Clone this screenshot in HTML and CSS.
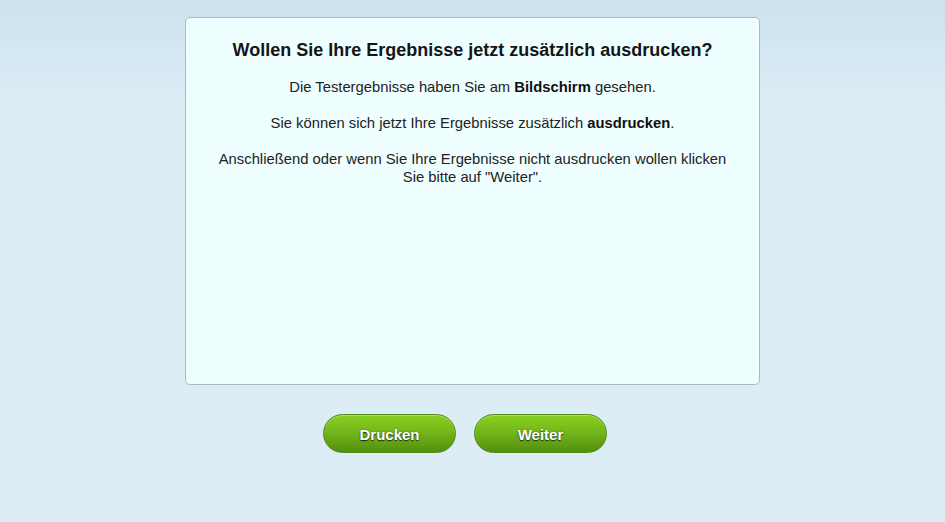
FILE: index.html
```html
<!DOCTYPE html>
<html lang="de">
<head>
<meta charset="utf-8">
<title>Ergebnisse drucken</title>
<link rel="stylesheet" href="styles.css">
</head>
<body>
<main class="page">
  <section class="box">
    <h2 class="title">Wollen Sie Ihre Ergebnisse jetzt zusätzlich ausdrucken?</h2>
    <p>Die Testergebnisse haben Sie am <b>Bildschirm</b> gesehen.</p>
    <p>Sie können sich jetzt Ihre Ergebnisse zusätzlich <b>ausdrucken</b>.</p>
    <p>Anschließend oder wenn Sie Ihre Ergebnisse nicht ausdrucken wollen klicken Sie bitte auf "Weiter".</p>
  </section>
  <div class="actions">
    <button class="btn" type="button">Drucken</button>
    <button class="btn" type="button">Weiter</button>
  </div>
</main>
</body>
</html>
```
FILE: styles.css
```css
html, body {
  margin: 0;
  padding: 0;
  height: 100%;
}
body {
  background: #ddedf5 linear-gradient(to bottom, #cce2ef 0px, #ddedf5 110px, #ddedf5 100%) no-repeat;
  font-family: "Liberation Sans", Arial, sans-serif;
  color: #222;
}
.page {
  display: flex;
  flex-direction: column;
  align-items: center;
  padding-top: 17px;
}
.box {
  box-sizing: border-box;
  width: 575px;
  height: 368px;
  background: #efffff;
  border: 1px solid #a7bcc5;
  border-radius: 5px;
  padding: 21px 28px 20px;
  text-align: center;
}
.title {
  font-size: 18px;
  line-height: 22px;
  font-weight: bold;
  color: #151515;
  margin: 0 0 17px;
}
.box p {
  font-size: 14.8px;
  line-height: 18px;
  margin: 0 0 18px;
}
.box b {
  color: #111;
}
.actions {
  display: flex;
  gap: 18px;
  margin-top: 29px;
  margin-right: 15px;
}
.btn {
  box-sizing: border-box;
  width: 133px;
  height: 39px;
  border-radius: 20px;
  border: 1px solid #558c16;
  background: linear-gradient(to bottom, #8ad022 0%, #74b71a 45%, #538f10 100%);
  box-shadow: inset 0 1px 0 rgba(255,255,255,0.3);
  color: #fff;
  font-family: "Liberation Sans", Arial, sans-serif;
  font-size: 15px;
  font-weight: bold;
  text-shadow: 0 1px 1px rgba(0,0,0,0.7), 0 0 2px rgba(0,40,0,0.4);
  cursor: pointer;
  padding: 2px 0 0;
}
```
